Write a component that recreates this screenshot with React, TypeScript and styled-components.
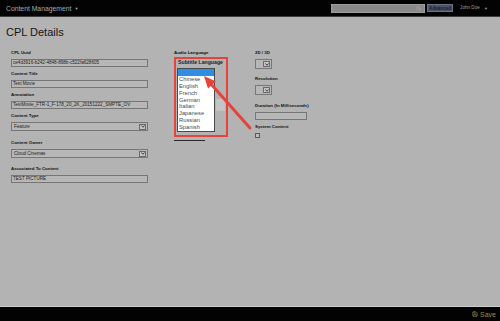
import React from 'react';
import styled, { createGlobalStyle } from 'styled-components';
import { Search, Save } from 'lucide-react';

const GlobalStyle = createGlobalStyle`
  html, body {
    margin: 0;
    padding: 0;
    background: #b3b3b3;
    font-family: "Liberation Sans", Arial, sans-serif;
  }
`;

const Page = styled.div`
  position: relative;
  height: 321px;
  display: flex;
  flex-direction: column;
  overflow: hidden;
`;

const TopBar = styled.div`
  height: 16px;
  background: #030303;
  border-bottom: 1px solid #3c3c3c;
  display: flex;
  align-items: center;
  padding: 0 12px 0 6px;
`;

const Brand = styled.div`
  color: #a9a9a9;
  font-size: 6.8px;
  white-space: nowrap;
`;

const Caret = styled.span`
  font-size: 4px;
  margin-left: 3px;
  vertical-align: middle;
`;

const Spacer = styled.div`
  flex: 1;
`;

const SearchBox = styled.div`
  width: 94px;
  height: 9px;
  box-sizing: border-box;
  background: #8a8a8a;
  border: 1px solid #9d9d9d;
  display: flex;
  align-items: center;
  justify-content: flex-end;
  padding-right: 3px;
  color: #aaaaaa;
`;

const AdvancedButton = styled.div`
  margin-left: 2px;
  width: 26px;
  height: 8px;
  box-sizing: border-box;
  background: #4b5262;
  border: 1px solid #6c7282;
  color: #142040;
  font-size: 4.6px;
  font-weight: bold;
  display: flex;
  align-items: center;
  justify-content: center;
`;

const UserMenu = styled.div`
  margin-left: 7px;
  color: #9c9c9c;
  font-size: 4.6px;
  white-space: nowrap;
`;

const Main = styled.div`
  flex: 1;
  padding: 9px 6px 0;
`;

const Heading = styled.h1`
  margin: 0;
  font-size: 11px;
  line-height: 13px;
  font-weight: normal;
  color: #151515;
`;

const FormGrid = styled.div`
  display: grid;
  grid-template-columns: 163px 81px 1fr;
  margin-top: 11px;
  padding-left: 5px;
`;

const Column = styled.div`
  display: flex;
  flex-direction: column;
  align-items: flex-start;
`;

const Field = styled.div<{ $gap: number }>`
  display: flex;
  flex-direction: column;
  align-items: flex-start;
  margin-bottom: ${p => p.$gap}px;
`;

const Label = styled.div`
  font-size: 4.4px;
  line-height: 6px;
  font-weight: bold;
  color: #111111;
  white-space: nowrap;
  margin-bottom: 3px;
`;

const TextBox = styled.div<{ $width: number }>`
  width: ${p => p.$width}px;
  height: 8px;
  box-sizing: border-box;
  border: 1px solid #767676;
  background: #b7b7b7;
  font-size: 4.6px;
  line-height: 6px;
  padding: 0 1px;
  color: #1e1e1e;
  white-space: nowrap;
  overflow: hidden;
`;

const SelectBox = styled.div<{ $width: number }>`
  width: ${p => p.$width}px;
  height: ${p => (p.$width < 30 ? 10 : 9)}px;
  box-sizing: border-box;
  border: 1px solid #767676;
  background: #b7b7b7;
  display: flex;
  align-items: center;
  justify-content: space-between;
  padding: 0 1px 0 2px;
  font-size: 4.6px;
  color: #1e1e1e;
  white-space: nowrap;
`;

const SelectArrow = styled.span`
  width: 7px;
  height: 6px;
  box-sizing: border-box;
  border: 1px solid #6a6a6a;
  background: #c4c4c4;
  display: flex;
  align-items: center;
  justify-content: center;
`;

const Highlight = styled.div`
  margin-top: 1px;
  width: 54px;
  height: 80px;
  box-sizing: border-box;
  border: 2px solid #e5433b;
  padding: 0 0 0 1px;
`;

const HighlightTitle = styled.div`
  font-size: 5.2px;
  line-height: 7px;
  font-weight: bold;
  color: #222222;
  margin-left: 1px;
  white-space: nowrap;
`;

const ListRow = styled.div`
  display: flex;
  align-items: flex-start;
  margin-top: 2px;
`;

const ListBox = styled.div`
  width: 38px;
  box-sizing: border-box;
  background: #ffffff;
  border: 1px solid #4a4a4a;
`;

const ListItem = styled.div<{ $selected?: boolean }>`
  height: 6.9px;
  line-height: 6.9px;
  font-size: 5.8px;
  padding-left: 1px;
  color: #4a4a4a;
  background: ${p => (p.$selected ? '#2f8de4' : 'transparent')};
`;

const Shade = styled.div`
  margin: 31px 0 0 1px;
  width: 9px;
  height: 12px;
  background: #c4c4c4;
`;

const Underline = styled.div`
  margin-top: 3px;
  width: 31px;
  height: 1px;
  background: #2a2a2a;
`;

const CheckBox = styled.div`
  width: 5px;
  height: 5px;
  box-sizing: border-box;
  border: 1px solid #5a5a5a;
  background: #bcbcbc;
`;

const ArrowOverlay = styled.svg`
  position: absolute;
  left: 195px;
  top: 66px;
  pointer-events: none;
`;

const Footer = styled.div`
  height: 14px;
  background: #020202;
  border-top: 1px solid #cfcfcf;
  display: flex;
  align-items: center;
  justify-content: flex-end;
  padding-right: 4px;
  color: #9a8b55;
`;

const SaveLabel = styled.span`
  font-size: 7px;
  margin-left: 2px;
`;

const Chevron = () => (
  <svg width="4" height="3" viewBox="0 0 8 6">
    <path d="M1 1 L4 4.5 L7 1" stroke="#222" strokeWidth="1.6" fill="none" />
  </svg>
);

const Select: React.FC<{ width: number; value?: string }> = ({ width, value }) => (
  <SelectBox $width={width}>
    <span>{value}</span>
    <SelectArrow>
      <Chevron />
    </SelectArrow>
  </SelectBox>
);

const languages = ['Chinese', 'English', 'French', 'German', 'Italian', 'Japanese', 'Russian', 'Spanish'];

export default function App() {
  return (
    <Page>
      <GlobalStyle />
      <TopBar>
        <Brand>
          Content Management<Caret>▼</Caret>
        </Brand>
        <Spacer />
        <SearchBox>
          <Search size={5} strokeWidth={3} />
        </SearchBox>
        <AdvancedButton>Advanced</AdvancedButton>
        <UserMenu>
          John Doe <Caret>▼</Caret>
        </UserMenu>
      </TopBar>

      <Main>
        <Heading>CPL Details</Heading>
        <FormGrid>
          <Column>
            <Field $gap={4}>
              <Label>CPL Uuid</Label>
              <TextBox $width={137}>ce4d3916-b242-4848-898b-c522fa628605</TextBox>
            </Field>
            <Field $gap={4}>
              <Label>Content Title</Label>
              <TextBox $width={137}>Test Movie</TextBox>
            </Field>
            <Field $gap={4}>
              <Label>Annotation</Label>
              <TextBox $width={137}>TestMovie_FTR-1_F-178_20_2K_20151222_SMPTE_OV</TextBox>
            </Field>
            <Field $gap={9}>
              <Label>Content Type</Label>
              <Select width={137} value="Feature" />
            </Field>
            <Field $gap={8}>
              <Label>Content Owner</Label>
              <Select width={137} value="Cloud Cinemas" />
            </Field>
            <Field $gap={0}>
              <Label>Associated To Content</Label>
              <TextBox $width={137}>TEST PICTURE</TextBox>
            </Field>
          </Column>

          <Column>
            <Label style={{ marginBottom: 0 }}>Audio Language</Label>
            <Highlight>
              <HighlightTitle>Subtitle Language</HighlightTitle>
              <ListRow>
                <ListBox>
                  <ListItem $selected />
                  {languages.map(l => (
                    <ListItem key={l}>{l}</ListItem>
                  ))}
                </ListBox>
                <Shade />
              </ListRow>
            </Highlight>
            <Underline />
          </Column>

          <Column>
            <Field $gap={7}>
              <Label>2D / 3D</Label>
              <Select width={17} />
            </Field>
            <Field $gap={8}>
              <Label>Resolution</Label>
              <Select width={17} />
            </Field>
            <Field $gap={4}>
              <Label>Duration (In Milliseconds)</Label>
              <TextBox $width={52} />
            </Field>
            <Field $gap={0}>
              <Label>System Content</Label>
              <CheckBox />
            </Field>
          </Column>
        </FormGrid>
      </Main>

      <Footer>
        <Save size={6} strokeWidth={2.5} />
        <SaveLabel>Save</SaveLabel>
      </Footer>

      <ArrowOverlay width="60" height="68" viewBox="0 0 60 68">
        <line x1="55" y1="62" x2="16" y2="18" stroke="#e5433b" strokeWidth="3" strokeLinecap="round" />
        <polygon points="9,10 21,15.5 13,22.5" fill="#e5433b" />
      </ArrowOverlay>
    </Page>
  );
}
